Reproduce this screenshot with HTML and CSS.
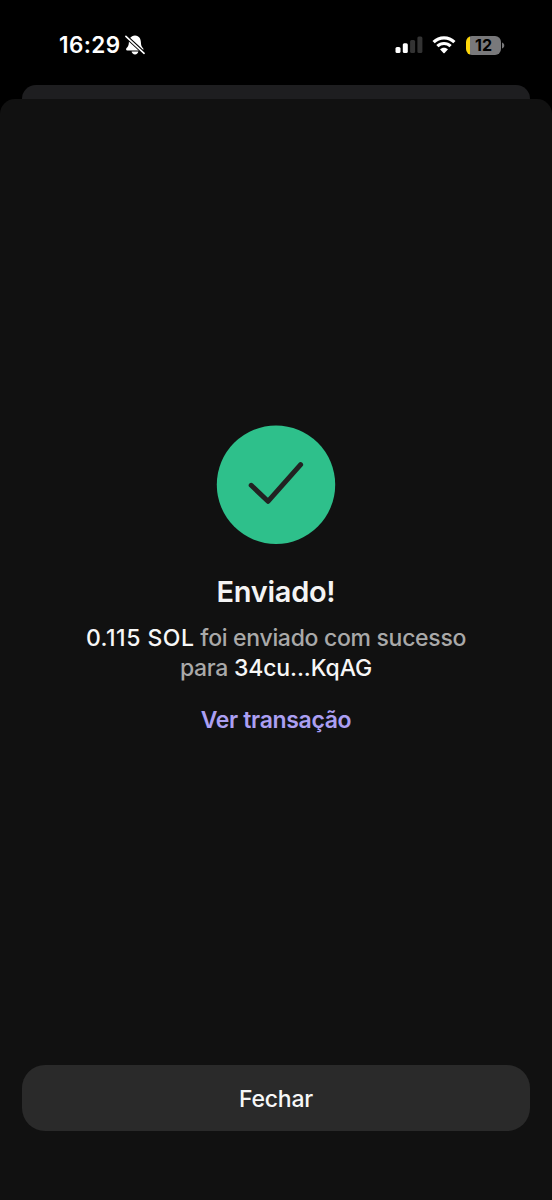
FILE: index.html
```html
<!DOCTYPE html>
<html lang="pt">
<head>
<meta charset="utf-8">
<title>Enviado</title>
<link rel="stylesheet" href="styles.css">
</head>
<body>
<div class="phone">
  <header class="status">
    <div class="status-left">
      <span class="time">16:29</span>
      <svg class="bell" width="20" height="20" viewBox="0 0 20 20">
        <path d="M10 0.400C5.500 0.700 4 4 3.900 7.200C3.800 10.500 3 11.600 1.600 13C0.700 14 1 15.600 2.300 15.600H17.200C18.500 15.600 18.800 14 17.900 13C16.500 11.600 16 10.500 15.900 7.200C15.800 4 14.500 0.700 10 0.400Z" fill="#fff"/>
        <path d="M6.600 16.500H13.400C13 18.300 11.800 19.400 10 19.400S7 18.300 6.600 16.500Z" fill="#fff"/>
        <path d="M0.600 1L19.400 18.500" stroke="#000" stroke-width="3.600"/>
        <path d="M0.900 1.300L19.100 18.300" stroke="#fff" stroke-width="1.600" stroke-linecap="round"/>
      </svg>
    </div>
    <div class="status-right">
      <svg class="signal" width="28" height="18" viewBox="0 0 28 18">
        <rect x="0.500" y="11" width="5" height="6" rx="1.500" fill="#fff"/>
        <rect x="7.800" y="7.200" width="5" height="9.800" rx="1.500" fill="#fff"/>
        <rect x="15.100" y="4" width="5" height="13" rx="1.500" fill="#333"/>
        <rect x="22.400" y="0.400" width="5" height="16.600" rx="1.500" fill="#333"/>
      </svg>
      <svg class="wifi" width="24" height="18" viewBox="0 0 24 18">
        <g fill="none" stroke="#fff" stroke-width="3.200">
          <path d="M1.600 6.200C7.300 0.500 16.700 0.500 22.400 6.200"/>
          <path d="M5.400 10.200C9.100 6.600 14.900 6.600 18.600 10.200"/>
        </g>
        <path d="M8 13.200C10.100 11.100 13.900 11.100 16 13.200L12.600 16.900Q12 17.500 11.400 16.900Z" fill="#fff"/>
      </svg>
      <div class="battery"><span class="level">12</span></div>
      <svg class="cap" width="3" height="7" viewBox="0 0 3 7"><path d="M0 0.500C3 1.500 3 5.500 0 6.500Z" fill="#777779"/></svg>
    </div>
  </header>
  <div class="back-card"></div>
  <main class="sheet">
    <section class="result">
      <svg class="success" width="120" height="120" viewBox="0 0 120 120">
        <circle cx="60" cy="59.700" r="59.200" fill="#2ec08b"/>
        <path d="M35.200 60.300L52 76.300L84.600 39.700" fill="none" stroke="#222" stroke-width="5" stroke-linecap="round" stroke-linejoin="round"/>
      </svg>
      <h1 class="title">Enviado!</h1>
      <p class="message"><b class="amount">0.115 SOL</b> foi enviado com sucesso<br>para <b>34cu...KqAG</b></p>
      <a class="link">Ver transação</a>
    </section>
    <button class="close">Fechar</button>
  </main>
</div>
</body>
</html>
```
FILE: styles.css
```css
* { box-sizing: border-box; }
body { margin: 0; background: #000; font-family: Inter, "Liberation Sans", sans-serif; }
.phone { display: flex; flex-direction: column; width: 552px; height: 1200px; background: #000; overflow: hidden; }
.status { display: flex; justify-content: space-between; height: 85px; padding: 0 48px 0 59px; }
.status-left { display: flex; align-items: flex-start; padding-top: 34px; }
.time { width: 66px; color: #fff; font-size: 22.5px; line-height: 22px; font-weight: 600; letter-spacing: 0.4px; white-space: nowrap; }
.bell { margin-top: 1px; }
.status-right { display: flex; align-items: flex-start; padding-top: 36px; }
.wifi { margin-left: 9px; }
.battery { width: 35px; height: 19px; margin-left: 10px; border-radius: 6px; background: linear-gradient(90deg, #fdd60a 4px, #79797b 4px); text-align: center; }
.level { color: #000; font-size: 16px; font-weight: 700; line-height: 19px; display: block; }
.cap { margin: 6px -1px 0 1px; }
.back-card { flex: none; height: 14px; margin: 0 22px; border-radius: 14px 14px 0 0; background: #1e1e20; }
.sheet { flex: 1; display: flex; flex-direction: column; padding: 326px 22px 69px; border-radius: 15px 15px 0 0; background: #111; }
.result { display: flex; flex-direction: column; align-items: center; text-align: center; }
.title { margin: 29px 0 0; color: #f4f4f4; font-size: 29px; line-height: 36px; font-weight: 600; letter-spacing: -0.3px; }
.message { margin: 13px 0 0; color: #a9a9a9; font-size: 23px; line-height: 30px; font-weight: 500; letter-spacing: -0.3px; white-space: nowrap; }
.message b { color: #f7f7f7; font-weight: 500; letter-spacing: -0.1px; }
.message .amount { letter-spacing: 0.5px; }
.link { margin-top: 22px; color: #ab9ff2; font-size: 23px; line-height: 30px; font-weight: 600; letter-spacing: -0.35px; }
.close { height: 66px; margin-top: auto; padding: 2px 0 0; border: 0; border-radius: 23px; background: #2a2a2a; color: #f7f7f7; font-family: inherit; font-size: 23px; line-height: 30px; font-weight: 500; letter-spacing: -0.2px; }
```
